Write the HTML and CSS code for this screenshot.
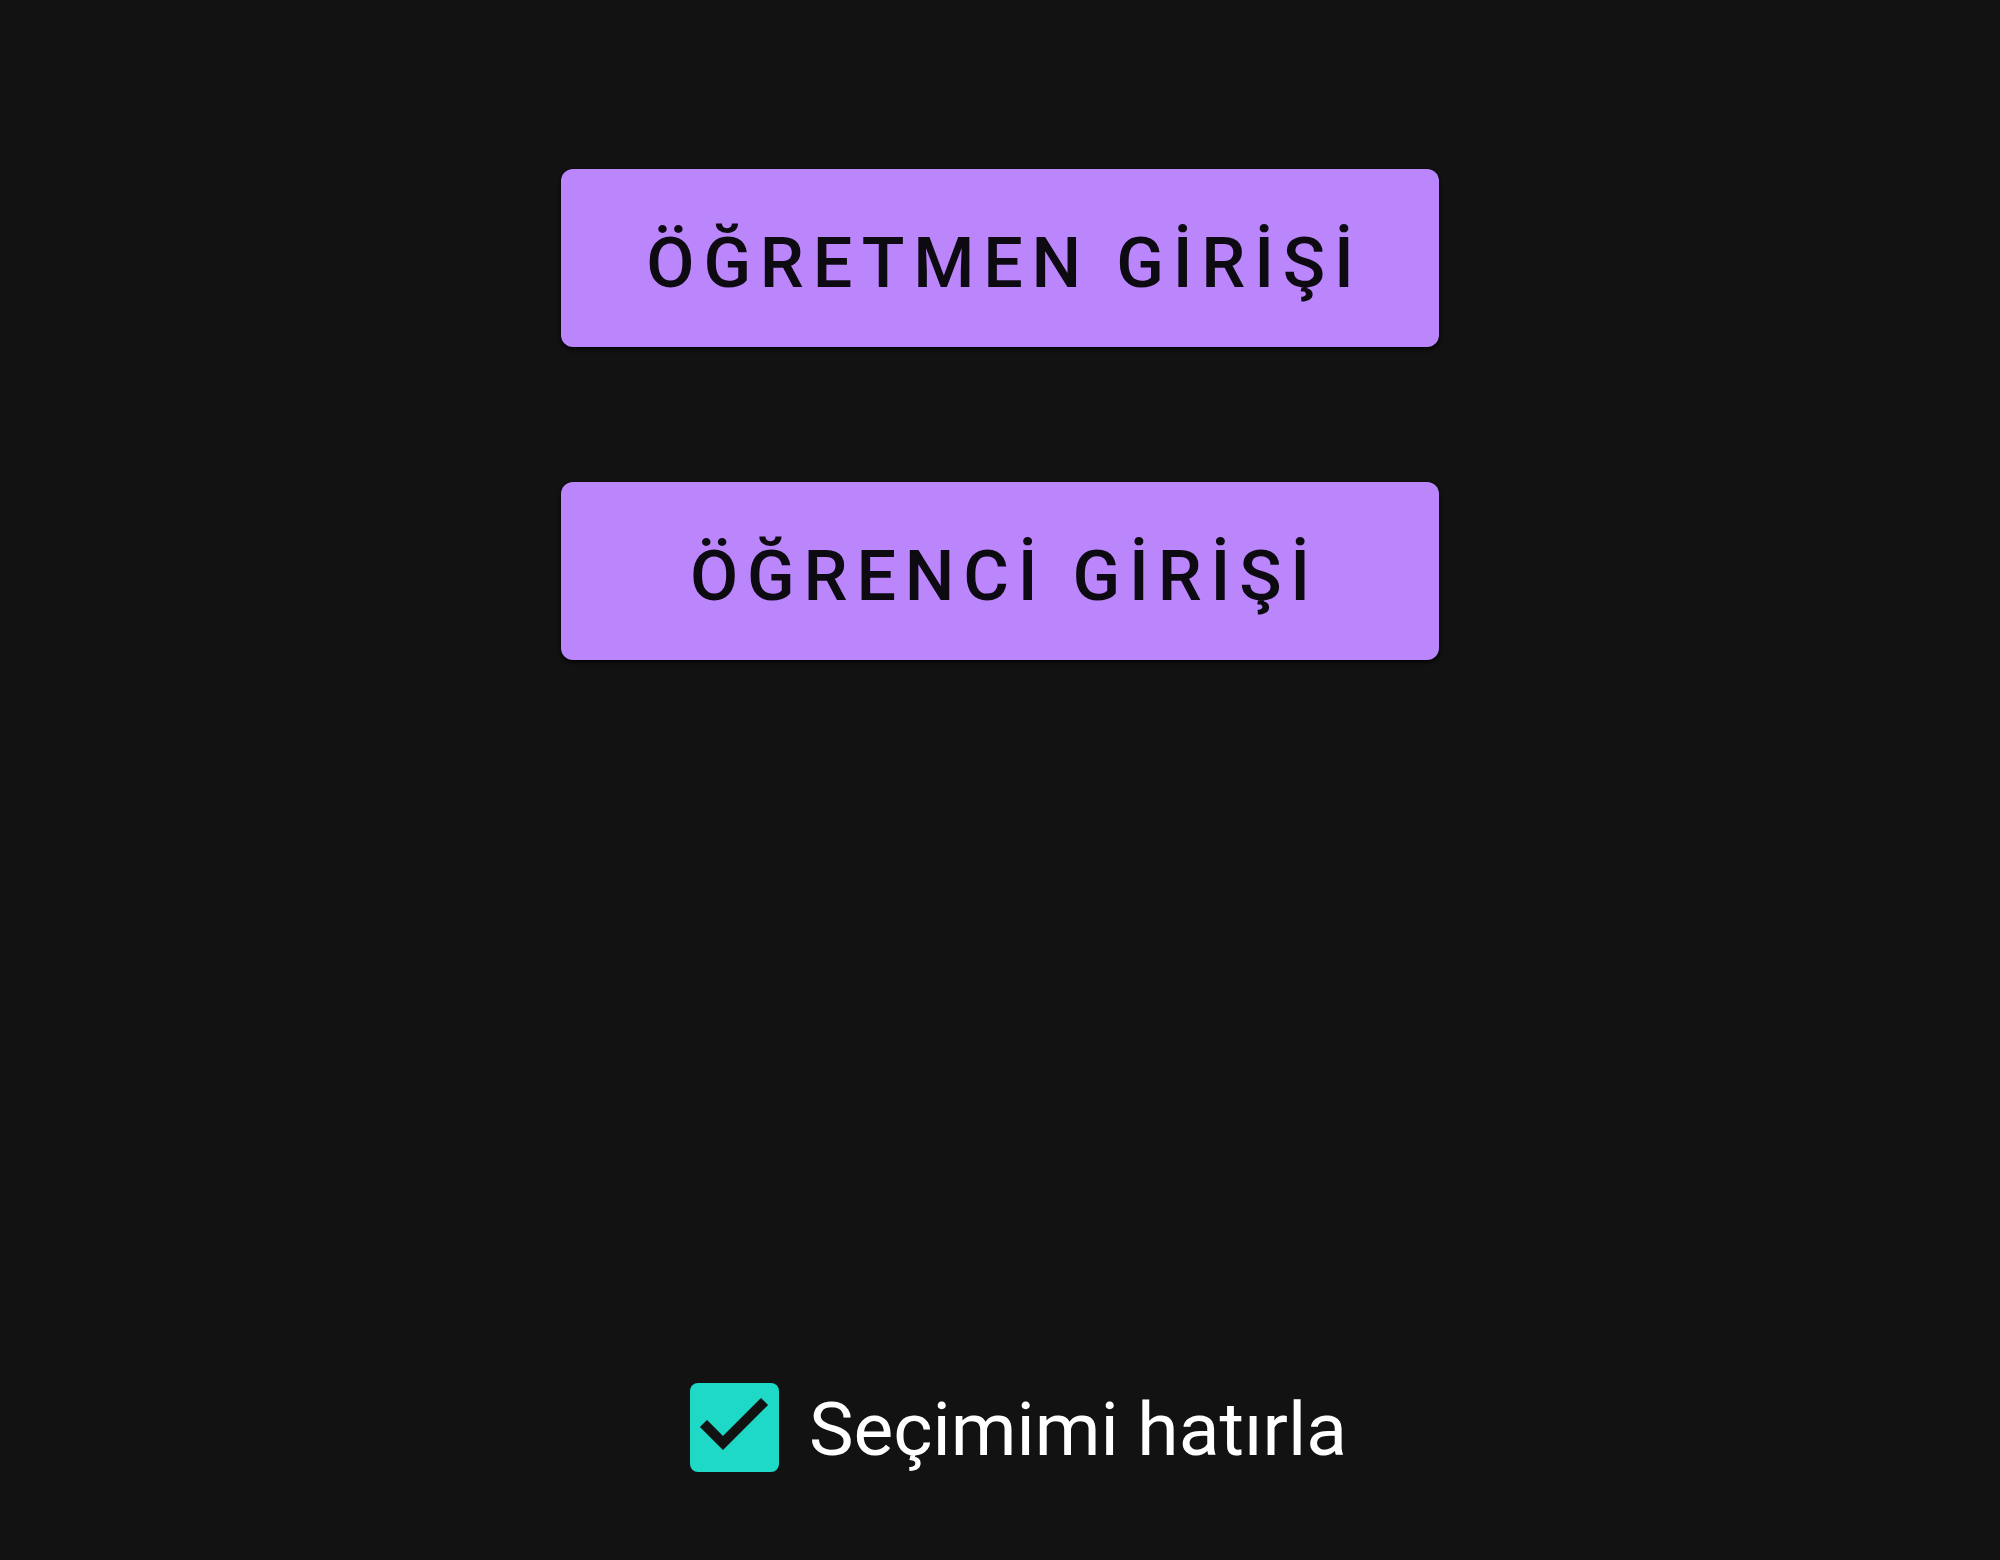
FILE: index.html
```html
<!DOCTYPE html>
<html lang="tr">
<head>
<meta charset="utf-8">
<title>Giriş</title>
<link rel="stylesheet" href="styles.css">
</head>
<body>
<main class="screen">
  <div class="actions">
    <button class="btn">ÖĞRETMEN GİRİŞİ</button>
    <button class="btn">ÖĞRENCİ GİRİŞİ</button>
  </div>
  <label class="remember">
    <span class="box">
      <svg viewBox="0 0 89 89" width="89" height="89" aria-hidden="true">
        <polyline points="17,44 33,60 71,22" fill="none" stroke="#121212" stroke-width="10" stroke-linecap="square" stroke-linejoin="miter"/>
      </svg>
    </span>
    <span class="remember-text">Seçimimi hatırla</span>
  </label>
</main>
</body>
</html>
```
FILE: styles.css
```css
html, body {
  margin: 0;
  padding: 0;
  background: #121212;
}

.screen {
  width: 2000px;
  height: 1560px;
  display: flex;
  flex-direction: column;
  align-items: center;
  box-sizing: border-box;
  padding-top: 169px;
  font-family: Roboto, "Noto Sans", sans-serif;
}

.actions {
  display: flex;
  flex-direction: column;
  align-items: center;
  gap: 135px;
}

.btn {
  width: 878px;
  height: 178px;
  border: none;
  border-radius: 12px;
  background: #bb86fc;
  color: #0d0a12;
  font-family: Roboto, "Noto Sans", sans-serif;
  font-weight: 500;
  font-size: 70px;
  letter-spacing: 8.8px;
  padding: 10px 0 0 9px;
  box-sizing: border-box;
  box-shadow: 0 3px 4px rgba(0, 0, 0, 0.6), 0 1px 2px rgba(0, 0, 0, 0.5);
  display: flex;
  align-items: center;
  justify-content: center;
}

.remember {
  margin-top: 721px;
  display: flex;
  align-items: center;
  gap: 30px;
  padding-left: 37px;
}

.box {
  width: 89px;
  height: 89px;
  border-radius: 8px;
  background: #1dd9c6;
  display: block;
}

.box svg {
  display: block;
}

.remember-text {
  color: #ffffff;
  font-size: 75px;
  font-weight: 400;
  line-height: 89px;
  padding-top: 4px;
}
```
